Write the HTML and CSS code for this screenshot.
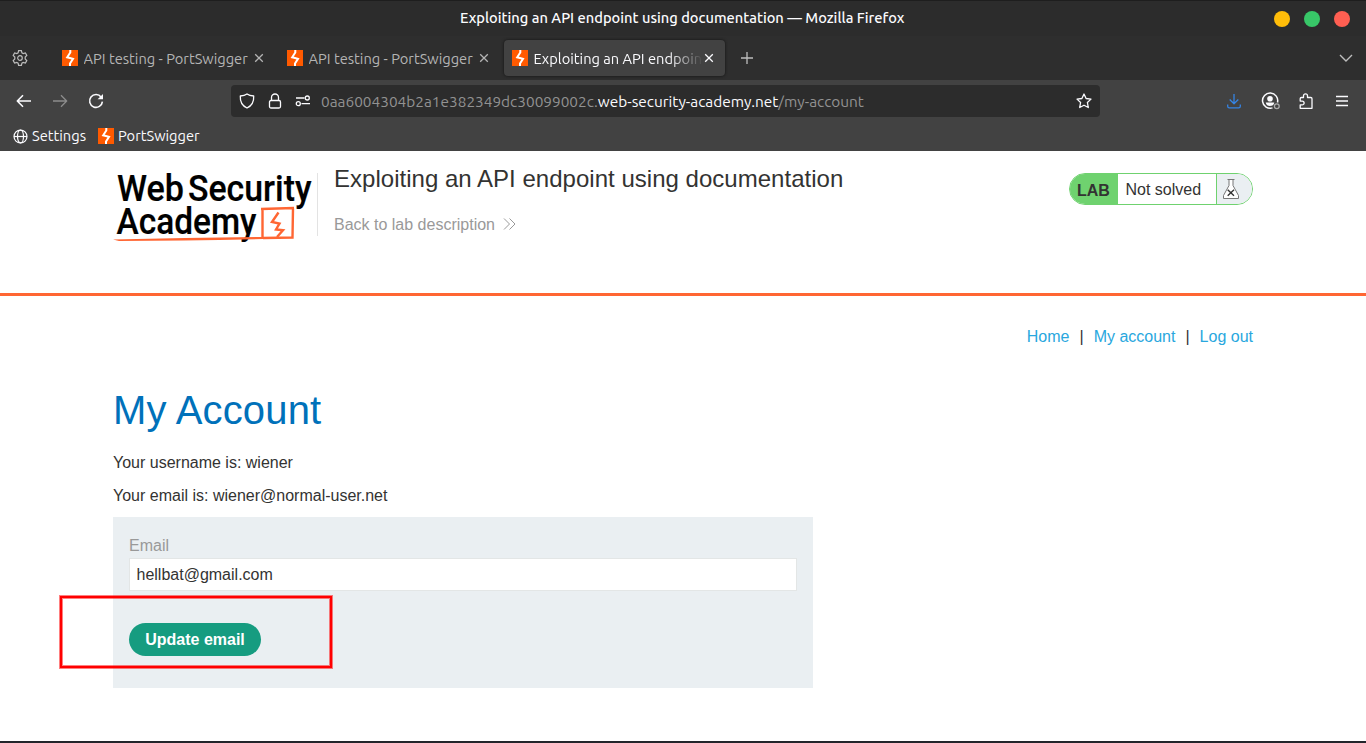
FILE: index.html
```html
<!DOCTYPE html>
<html lang="en">
<head>
<meta charset="utf-8">
<title>Exploiting an API endpoint using documentation</title>
<link rel="stylesheet" href="styles.css">
</head>
<body>
<svg width="0" height="0" class="defs">
  <symbol id="favicon" viewBox="0 0 16 16">
    <path fill="#ff5a00" d="M0 0h16v16H0z"/>
    <path fill="none" stroke="#fff" stroke-width="2" d="M8.300 0v2.500L5.200 7.300l5.800 1.500-3 4.700V16"/>
  </symbol>
  <symbol id="close" viewBox="0 0 10 10"><path d="M1.2 1.2l7.6 7.6M8.8 1.2L1.2 8.8" fill="none" stroke="currentColor" stroke-width="1.3"/></symbol>
</svg>
<div class="titlebar">
  <span class="window-title">Exploiting an API endpoint using documentation — Mozilla Firefox</span>
  <div class="window-buttons"><i class="min"></i><i class="max"></i><i class="quit"></i></div>
</div>
<div class="tabs">
  <svg class="gear" viewBox="0 0 16 16"><path d="M6.600 .6h2.800l.5 2.300 1.300.7 2.200-.7 1.400 2.500-1.600 1.600v2l1.600 1.600-1.400 2.500-2.200-.7-1.300.7-.5 2.300H6.600l-.5-2.300-1.300-.7-2.200.7-1.400-2.500L2.800 9V7L1.200 5.400l1.400-2.500 2.200.7 1.300-.7z"/><circle cx="8" cy="8" r="2.300"/></svg>
  <div class="tab"><svg class="fav"><use href="#favicon"/></svg><span class="tab-label">API testing - PortSwigger</span><svg class="x"><use href="#close"/></svg></div>
  <div class="tab"><svg class="fav"><use href="#favicon"/></svg><span class="tab-label">API testing - PortSwigger</span><svg class="x"><use href="#close"/></svg></div>
  <div class="tab active"><svg class="fav"><use href="#favicon"/></svg><span class="tab-label faded">Exploiting an API endpoint</span><svg class="x"><use href="#close"/></svg></div>
  <svg class="plus" viewBox="0 0 12 12"><path d="M6 0v12M0 6h12"/></svg>
  <svg class="chevron" viewBox="0 0 14 8"><path d="M1 1l6 6 6-6"/></svg>
</div>
<div class="navbar">
  <svg class="ico back" viewBox="0 0 16 16"><path d="M15 8H1.500M7 2.300L1.300 8 7 13.700"/></svg>
  <svg class="ico forward" viewBox="0 0 16 16"><path d="M1 8h13.500M9 2.300L14.700 8 9 13.700"/></svg>
  <svg class="ico reload" viewBox="0 0 16 16"><path d="M13.200 4.200A6.400 6.400 0 1 0 14.400 8.600"/><path class="solid" d="M15 1v5.300H9.600z"/></svg>
  <div class="urlbar">
    <svg class="ico" viewBox="0 0 16 16"><path d="M8 1C6.300 2.300 4 2.900 1.300 3c-.3 5 1.700 9.700 6.700 12 5-2.300 7-7 6.700-12C12 2.900 9.700 2.300 8 1z"/></svg>
    <svg class="ico lock" viewBox="0 0 16 16"><rect x="2.500" y="7.500" width="11" height="7.500" rx="1.500"/><path d="M4.500 7.500v-3a3.500 3.500 0 0 1 7 0v3"/></svg>
    <svg class="ico perms" viewBox="0 0 16 16"><path d="M1 5h8.500M6.500 10.700H15"/><circle cx="12.300" cy="5" r="2"/><circle cx="3.300" cy="10.700" r="2"/></svg>
    <span class="url"><span class="sub">0aa6004304b2a1e382349dc30099002c.</span><span class="host">web-security-academy.net</span><span class="path">/my-account</span></span>
    <svg class="ico star" viewBox="0 0 16 16"><path d="M8 1l2.100 4.500 4.900.600-3.600 3.400.9 5L8 12.200 3.700 14.500l.9-5L1 6.100l4.900-.6z"/></svg>
  </div>
  <div class="actions">
    <svg class="ico download" viewBox="0 0 16 16"><path d="M8 1v9.500M3.700 6.500L8 10.800l4.300-4.300M1.700 11.500v1.700q0 1.600 1.600 1.600h9.400q1.600 0 1.600-1.600v-1.700"/></svg>
    <svg class="ico account" viewBox="0 0 20 18"><path d="M11.500 15.900A7.600 7.600 0 1 1 16.500 10.500"/><circle class="solid" cx="9" cy="6.700" r="2.800"/><path class="solid" d="M4.700 10.500h8.600c-.3 2.500-2.300 3.500-4.300 3.500s-4-1-4.300-3.500z"/><circle class="dot" cx="15.800" cy="14.300" r="2.400"/></svg>
    <svg class="ico puzzle" viewBox="0 0 16 16"><path d="M5.500 4.500V2.800a2 2 0 0 1 4 0v1.700h3.300q1.200 0 1.200 1.200v9.600H2.200v-3.400h2a1.800 1.800 0 0 0 0-3.800h-2V5.700q0-1.200 1.200-1.200z"/></svg>
    <svg class="ico menu" viewBox="0 0 16 16"><path d="M2 3.500h12M2 8h12M2 12.500h12"/></svg>
  </div>
</div>
<div class="bookmarks">
  <svg class="globe" viewBox="0 0 16 16"><circle cx="8" cy="8" r="6.900"/><ellipse cx="8" cy="8" rx="3.200" ry="6.900"/><path d="M1 8h14"/></svg>
  <span class="bm-settings">Settings</span>
  <svg class="fav"><use href="#favicon"/></svg>
  <span class="bm-port">PortSwigger</span>
</div>
<main class="page">
  <header class="lab-header">
    <svg class="logo" viewBox="0 0 204 76">
      <g class="logo-text"><text x="4" y="35.300" textLength="67" lengthAdjust="spacingAndGlyphs">Web</text><text x="75" y="35.300" textLength="123.500" lengthAdjust="spacingAndGlyphs">Security</text><text x="3.500" y="68" textLength="140" lengthAdjust="spacingAndGlyphs">Academy</text></g>
      <path class="pen" d="M149.500 43v29M148 43l33-1M180 42.500L179.500 71.500 150 72"/>
      <path class="pen" d="M165.500 46.500l-6.500 9.500 7.500 1.500-3.500 6 7 .800-6 6.700"/>
      <path class="swash" d="M0 73.500Q75 71.500 150 71v2Q70 74.500 6 75z"/>
    </svg>
    <div class="lab-title"><h2>Exploiting an API endpoint using documentation</h2>
      <a class="back-link">Back to lab description <svg viewBox="0 0 13 12"><path d="M1 .5L6.500 6 1 11.500M6.500.5L12 6l-5.500 5.500"/></svg></a></div>
    <div class="lab-status"><b>LAB</b><span>Not solved</span><div class="flask"><svg viewBox="0 0 18 22"><path class="glass" d="M5.500 1.500h7M7 1.500v6L1.500 17.500v3h15v-3L11 7.500v-6"/><path class="cross" d="M5.700 11.700l6.300 6M12 11.700l-6.300 6"/></svg></div></div>
  </header>
  <section class="content">
    <nav class="links"><a>Home</a><span>|</span><a>My account</a><span>|</span><a>Log out</a></nav>
    <h1>My Account</h1>
    <p>Your username is: wiener</p>
    <p>Your email is: wiener@normal-user.net</p>
    <form class="email-form">
      <label for="email">Email</label>
      <input id="email" type="text" value="hellbat@gmail.com">
      <button type="button">Update email</button>
      <div class="highlight"></div>
    </form>
  </section>
</main>
</body>
</html>
```
FILE: styles.css
```css
* { box-sizing: border-box; }
body { margin: 0; width: 1366px; height: 743px; overflow: hidden; display: flex; flex-direction: column; background: #23252b; font: 16px/20px "Liberation Sans", Arial, sans-serif; color: #333332; }
svg { flex: none; display: block; }
.defs { position: absolute; }

.titlebar, .tabs, .navbar, .bookmarks { flex: none; display: flex; align-items: center; font-family: Ubuntu, "Noto Sans", sans-serif; font-size: 14.667px; white-space: nowrap; color: #fbfbfe; }
.titlebar { height: 36px; background: #2c2c2c; border-top: 1px solid #1e1e1e; padding: 0 16px 0 460px; justify-content: space-between; }
.window-title { font-weight: 500; margin-top: -1px; }
.window-buttons { display: flex; gap: 14px; }
.window-buttons i { width: 16px; height: 16px; border-radius: 50%; }
.min { background: #ffbd09; }
.max { background: #38c768; }
.quit { background: #ff5f52; }

.tabs { height: 44px; background: #2e2e2e; padding: 0 13px 0 12px; }
.gear { width: 16px; height: 16px; margin-right: 26px; fill: none; stroke: #bdbdbd; stroke-width: 1.2; }
.tab { width: 221px; height: 36px; margin-right: 4px; padding: 0 10px 0 8px; display: flex; align-items: center; border-radius: 4px; color: #b4b4b4; }
.tab.active { background: #424242; color: #fbfbfe; box-shadow: 0 0 3px #111; }
.fav { width: 16px; height: 16px; }
.tab-label { width: 165.5px; margin: 0 5px 0 5.5px; padding-top: 2px; overflow: hidden; }
.faded { width: 169.5px; margin-right: 1px; mask-image: linear-gradient(90deg, #000 80%, transparent 100%); }
.x { width: 10px; height: 10px; }
.plus { width: 12px; height: 12px; margin-left: 12px; fill: none; stroke: #bdbdbd; stroke-width: 1.3; }
.chevron { width: 14px; height: 8px; margin-left: auto; fill: none; stroke: #bdbdbd; stroke-width: 1.4; }

.navbar { height: 41px; background: #424242; padding: 0 16px; }
.ico { width: 16px; height: 16px; fill: none; stroke: #fbfbfe; stroke-width: 1.3; stroke-linejoin: round; }
.back, .forward { margin-right: 20px; }
.back { stroke-width: 1.6; }
.forward { stroke: #8c8c8c; }
.reload { margin-right: 127px; stroke-width: 1.6; }
.solid { fill: #fbfbfe; stroke: none; }
.urlbar { width: 869px; height: 32px; padding: 0 8px; border-radius: 4px; background: #2c2c2c; display: flex; align-items: center; }
.lock, .perms { margin-left: 12px; }
.url { margin-left: 10px; padding-top: 2px; font-size: 15.4px; color: #929292; }
.host { color: #fbfbfe; }
.star { margin-left: auto; }
.actions { display: flex; align-items: center; gap: 20px; margin-left: auto; }
.download { stroke: #3584e4; }
.account { width: 20px; height: 18px; margin: 0 -3px 0 -1px; stroke-width: 1.5; }
.account .dot { stroke: #aaa; stroke-width: 1.3; }

.bookmarks { height: 30px; background: #424242; padding-left: 13px; }
.globe { width: 15px; height: 15px; margin-right: 4px; fill: none; stroke: #fbfbfe; stroke-width: 1.3; }
.bm-settings { width: 54px; margin-right: 12px; }
.bm-port { margin-left: 4px; }

.page { flex: none; height: 590px; background: #fff; }
.lab-header { height: 145px; padding: 15px 113px 0; border-bottom: 3px solid #ff6633; display: flex; }
.logo { width: 204px; height: 76px; }
.logo-text { font: 500 37px Roboto, sans-serif; fill: #000; stroke: #000; stroke-width: .2; }
.pen { fill: none; stroke: #ff6633; stroke-width: 2.4; }
.swash { fill: #ff6633; }
.lab-title { height: 63px; margin: 7px 0 0; padding-left: 16px; border-left: 1px solid #e3e3e3; }
.lab-title h2 { margin: -8px 0 0; font-size: 24px; line-height: 28px; font-weight: 400; letter-spacing: .02px; }
.back-link { margin-top: 22px; display: flex; align-items: center; gap: 8px; color: #999; }
.back-link svg { width: 13px; height: 12px; margin-top: -2px; fill: none; stroke: #999; stroke-width: 1; }
.lab-status { margin: 7px 0 0 auto; width: 184px; height: 32px; display: flex; overflow: hidden; border: 1px solid #6fd26f; border-radius: 16px; line-height: 31px; }
.lab-status b { width: 48px; padding-left: 7px; background: #6fd26f; line-height: 33px; }
.lab-status span { width: 99px; padding-left: 7.5px; border-right: 1px solid #6fd26f; }
.flask { flex: 1; background: #eaeff2; padding: 4px 0 0 5px; }
.flask svg { width: 18px; height: 22px; fill: none; }
.glass { fill: #fff; stroke: #777; stroke-width: 1; }
.cross { stroke: #333; stroke-width: 1.4; }

.content { padding: 31px 113px 0; }
.links { display: flex; justify-content: flex-end; gap: 10px; color: #333332; }
.links a { color: #29a7de; }
h1 { margin: 39px 0 0; font-size: 40px; line-height: 48px; font-weight: 400; letter-spacing: .16px; color: #0071ba; }
p { margin: 19px 0 0; line-height: 20px; }
p + p { margin-top: 13px; }
.email-form { position: relative; margin-top: 11px; width: 700px; height: 171px; padding: 19px 16px 0; background: #eaeff2; display: flex; flex-direction: column; align-items: flex-start; }
label { color: #999; line-height: 20px; }
input { width: 668px; height: 33px; margin: 2px 0 32px; padding: 0 6.5px; border: 1px solid #e3e6e6; background: #fff; font: inherit; color: inherit; }
button { width: 132px; height: 33px; padding: 0; border: 0; border-radius: 17px; background: #169c80; color: #fff; font: bold 16px "Liberation Sans", Arial, sans-serif; }
.highlight { position: absolute; left: -53px; top: 79px; width: 272px; height: 72px; border: 2px solid #f00; box-shadow: 0 0 0 1px rgba(255, 0, 0, .5), inset 0 0 0 1px rgba(255, 0, 0, .5); }
```
